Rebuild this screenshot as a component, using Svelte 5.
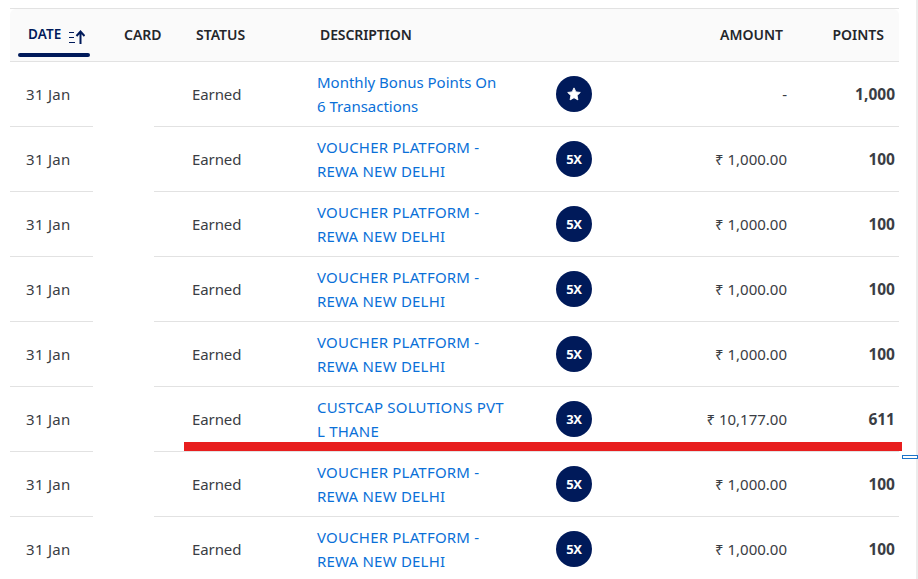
<script>
  const voucher = { lines: ['VOUCHER PLATFORM -', 'REWA NEW DELHI'], upper: true, badge: '5X', amount: '₹ 1,000.00', points: '100' };
  const rows = [
    { lines: ['Monthly Bonus Points On', '6 Transactions'], badge: 'star', amount: '-', points: '1,000' },
    voucher,
    voucher,
    voucher,
    voucher,
    { lines: ['CUSTCAP SOLUTIONS PVT', 'L THANE'], upper: true, badge: '3X', amount: '₹ 10,177.00', points: '611' },
    voucher,
    voucher
  ];
</script>

<div class="page">
  <div class="table">
    <div class="row head">
      <div class="th date-th">
        <span class="date-label">DATE</span>
        <svg class="sort" width="17" height="14" viewBox="0 0 17 14" aria-hidden="true">
          <path d="M1 2.5h5M1 7.5h5M1 12.5h6" stroke="#001a5a" stroke-width="1" fill="none" />
          <path d="M12.5 14V2M8.5 6l4-4.5 4 4.5" stroke="#001a5a" stroke-width="2" fill="none" />
        </svg>
      </div>
      <div class="th card-th">CARD</div>
      <div class="th status-th">STATUS</div>
      <div class="th desc-th">DESCRIPTION</div>
      <div class="th amount-th">AMOUNT</div>
      <div class="th points-th">POINTS</div>
    </div>

    {#each rows as r}
      <div class="row">
        <div class="td date">31 Jan</div>
        <div class="td card"></div>
        <div class="td status">Earned</div>
        <div class="td desc">
          <a href="#top" class:upper={r.upper}>{r.lines[0]}<br />{r.lines[1]}</a>
          <span class="badge">
            {#if r.badge === 'star'}
              <svg width="14" height="14" viewBox="0 0 24 24" aria-hidden="true">
                <path d="M12 1.5l3.3 6.9 7.5 1-5.5 5.2 1.4 7.5L12 18.4l-6.7 3.7 1.4-7.5L1.2 9.4l7.5-1z" fill="#fff" stroke="#fff" stroke-width="1.5" stroke-linejoin="round" />
              </svg>
            {:else}
              <span class="mult">{r.badge}</span>
            {/if}
          </span>
        </div>
        <div class="td amount">{r.amount}</div>
        <div class="td points">{r.points}</div>
      </div>
    {/each}
  </div>

  <div class="strip"></div>
  <div class="redline"></div>
  <div class="marker"></div>
</div>

<style>
  :global(body) {
    margin: 0;
    background: #fff;
  }

  .page {
    position: relative;
    width: 918px;
    height: 579px;
    overflow: hidden;
    padding: 8px 0 0 10px;
    box-sizing: border-box;
    font-family: "Noto Sans", "Open Sans", sans-serif;
    color: #3a3d44;
  }

  .table {
    width: 889px;
  }

  .row {
    display: grid;
    grid-template-columns: 88px 89px 125px 373px 111px 103px;
    height: 65px;
  }

  .head {
    height: 54px;
    box-sizing: border-box;
    border-top: 1px solid #e2e2e2;
  }

  .th {
    background: #fafafa;
    border-bottom: 1px solid #e2e2e2;
    box-sizing: border-box;
    display: flex;
    align-items: center;
    font-size: 14px;
    font-weight: 600;
    color: #24262b;
    padding-bottom: 2px;
  }

  .date-th {
    position: relative;
    padding-left: 18px;
    color: #001a5a;
    border-top-left-radius: 6px;
  }

  .date-th::after {
    content: '';
    position: absolute;
    left: 8px;
    bottom: 4px;
    width: 72px;
    height: 4px;
    border-radius: 2px;
    background: #001a5a;
  }

  .date-label {
    font-size: 13.5px;
    letter-spacing: 0.1px;
  }

  .sort {
    margin-left: 7px;
    margin-top: 5px;
  }

  .card-th {
    padding-left: 26px;
  }

  .status-th {
    padding-left: 9px;
  }

  .desc-th {
    padding-left: 8px;
    letter-spacing: -0.1px;
  }

  .amount-th {
    justify-content: flex-end;
    padding-right: 13px;
  }

  .points-th {
    justify-content: flex-end;
    padding-right: 15px;
    border-top-right-radius: 6px;
  }

  .td {
    box-sizing: border-box;
    border-bottom: 1px solid #e2e2e2;
    display: flex;
    align-items: center;
    font-size: 15px;
    padding-bottom: 1px;
  }

  .date {
    padding-left: 16px;
    margin-right: 5px;
    letter-spacing: 0.3px;
  }

  .card {
    margin-left: 56px;
  }

  .status {
    padding-left: 5px;
    letter-spacing: -0.1px;
  }

  .desc {
    padding-left: 5px;
  }

  .desc a {
    display: block;
    width: 239px;
    color: #0a70d8;
    text-decoration: none;
    line-height: 24px;
  }

  .desc a.upper {
    letter-spacing: 0.2px;
  }

  .badge {
    display: flex;
    align-items: center;
    justify-content: center;
    width: 36px;
    height: 36px;
    border-radius: 50%;
    background: #001a5a;
    color: #fff;
  }

  .mult {
    font-weight: 700;
    font-size: 13px;
    line-height: 1;
    letter-spacing: -0.2px;
    padding-top: 1px;
  }

  .amount {
    justify-content: flex-end;
    padding-right: 9px;
  }

  .points {
    justify-content: flex-end;
    padding-right: 4px;
    font-size: 15.5px;
    font-weight: 700;
    padding-bottom: 0;
  }

  .strip {
    position: absolute;
    right: 0;
    top: 0;
    bottom: 0;
    width: 2px;
    background: #ececec;
  }

  .redline {
    position: absolute;
    left: 184px;
    top: 442px;
    width: 718px;
    height: 9px;
    background: #e81e1e;
  }

  .marker {
    position: absolute;
    left: 902px;
    top: 455px;
    width: 16px;
    height: 4px;
    box-sizing: border-box;
    border: 1px solid #1a73c8;
    background: #fff;
  }
</style>
